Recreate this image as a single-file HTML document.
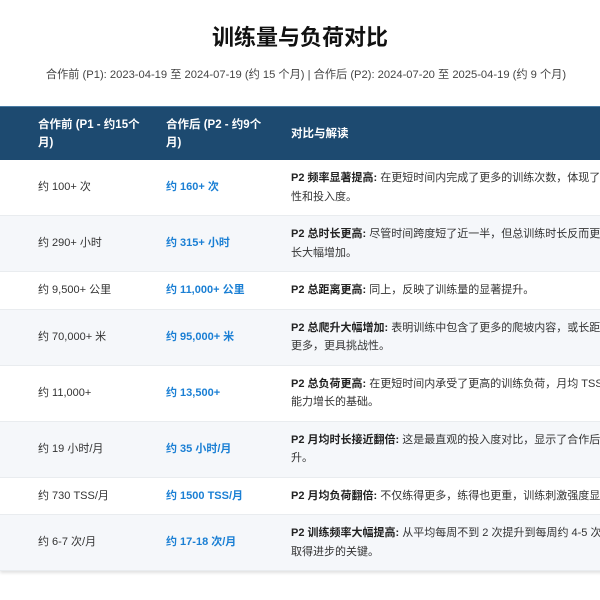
<!DOCTYPE html>
<html><head><meta charset="utf-8"><style>
body{margin:0;background:#fff;width:600px;height:600px;overflow:hidden;font-family:"Liberation Sans","Noto Sans CJK SC",sans-serif;color:#333;position:relative}
h1{margin:0;position:absolute;top:23px;left:0;width:600px;text-align:center;font-size:22px;font-weight:bold;color:#111;line-height:30px}
.sub{position:absolute;top:67px;left:0;width:612px;text-align:center;font-size:11.2px;color:#444;line-height:16px;white-space:nowrap}
.wrap{position:absolute;top:106px;left:0;width:600px;height:470px;overflow:hidden}
table{width:760px;border-collapse:collapse;box-shadow:0 2px 3px rgba(0,0,0,.12);table-layout:fixed}
th{background:#1d4a70;color:#fff;font-size:11.5px;font-weight:bold;text-align:left;line-height:18px;padding:8.5px 0 8.5px 38px;height:36px;border-top:1px solid #4a7ca4;white-space:nowrap}
td{font-size:11px;line-height:18.5px;padding:9px 0 9px 38px;vertical-align:middle;white-space:nowrap;overflow:hidden;border-bottom:1px solid #e9ecef}
tr:nth-child(even) td{background:#f5f7fa}
td.b{color:#1a7fd4;font-weight:bold}
td.c{padding-left:0}
td.c b{color:#222}
</style></head><body>
<h1>训练量与负荷对比</h1>
<div class="sub">合作前 (P1): 2023-04-19 至 2024-07-19 (约 15 个月) | 合作后 (P2): 2024-07-20 至 2025-04-19 (约 9 个月)</div>
<div class="wrap">
<table>
<colgroup><col style="width:128px"><col style="width:163px"><col style="width:469px"></colgroup>
<thead><tr><th>合作前 (P1 - 约15个<br>月)</th><th>合作后 (P2 - 约9个<br>月)</th><th style="padding-left:0">对比与解读</th></tr></thead>
<tbody>
<tr><td>约 100+ 次</td><td class="b">约 160+ 次</td><td class="c"><b>P2 频率显著提高:</b> 在更短时间内完成了更多的训练次数，体现了更高的训练一致<br>性和投入度。</td></tr>
<tr><td>约 290+ 小时</td><td class="b">约 315+ 小时</td><td class="c"><b>P2 总时长更高:</b> 尽管时间跨度短了近一半，但总训练时长反而更多，说明单次训练时<br>长大幅增加。</td></tr>
<tr><td>约 9,500+ 公里</td><td class="b">约 11,000+ 公里</td><td class="c"><b>P2 总距离更高:</b> 同上，反映了训练量的显著提升。</td></tr>
<tr><td>约 70,000+ 米</td><td class="b">约 95,000+ 米</td><td class="c"><b>P2 总爬升大幅增加:</b> 表明训练中包含了更多的爬坡内容，或长距离训练<br>更多，更具挑战性。</td></tr>
<tr><td>约 11,000+</td><td class="b">约 13,500+</td><td class="c"><b>P2 总负荷更高:</b> 在更短时间内承受了更高的训练负荷，月均 TSS 大幅提升，是<br>能力增长的基础。</td></tr>
<tr><td>约 19 小时/月</td><td class="b">约 35 小时/月</td><td class="c"><b>P2 月均时长接近翻倍:</b> 这是最直观的投入度对比，显示了合作后训练量的大幅提<br>升。</td></tr>
<tr><td>约 730 TSS/月</td><td class="b">约 1500 TSS/月</td><td class="c"><b>P2 月均负荷翻倍:</b> 不仅练得更多，练得也更重，训练刺激强度显著提高。</td></tr>
<tr><td>约 6-7 次/月</td><td class="b">约 17-18 次/月</td><td class="c"><b>P2 训练频率大幅提高:</b> 从平均每周不到 2 次提升到每周约 4-5 次，这是<br>取得进步的关键。</td></tr>
</tbody></table>
</div>
</body></html>
